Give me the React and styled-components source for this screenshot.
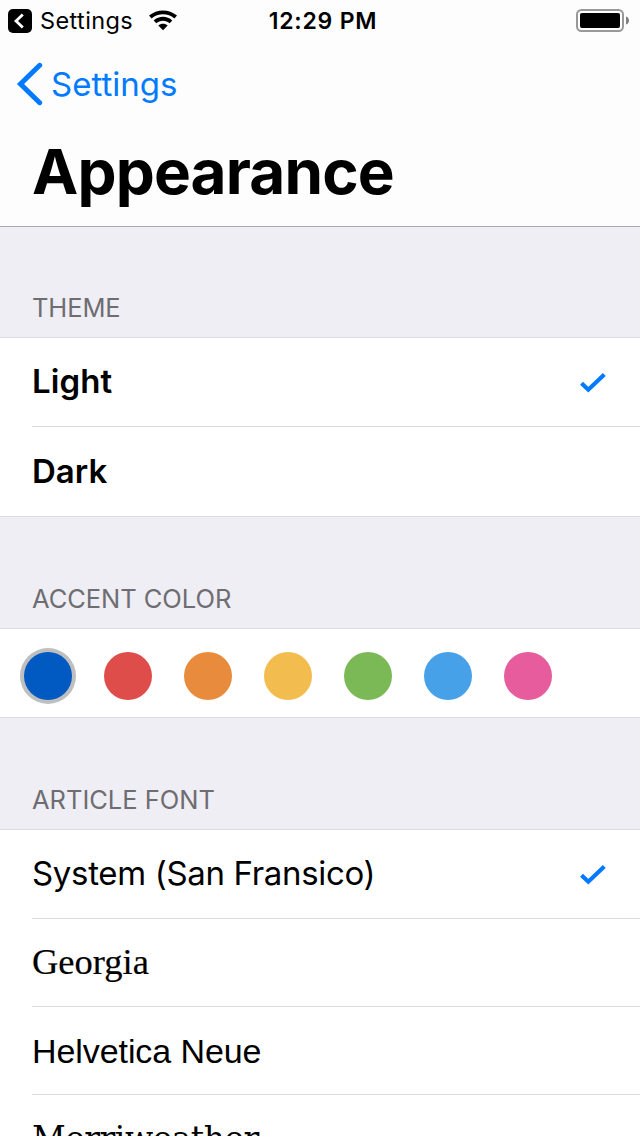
import React from "react";
import styled, { createGlobalStyle } from "styled-components";

const GlobalStyle = createGlobalStyle`
  * { box-sizing: border-box; }
  body { margin: 0; background: #efeef4; }
`;

const Screen = styled.main`
  width: 640px;
  height: 1136px;
  overflow: hidden;
  display: flex;
  flex-direction: column;
  background: #efeef4;
  color: #000;
  font-family: Inter, "Liberation Sans", sans-serif;
`;

const Header = styled.header`
  flex: none;
  height: 227px;
  background: #fdfdfd;
  border-bottom: 1px solid #a9a9ae;
`;

const StatusBar = styled.div`
  height: 40px;
  display: grid;
  grid-template-columns: 1fr auto 1fr;
  align-items: center;
  padding: 1px 11px 0 8px;
`;

const StatusLeft = styled.div`
  display: flex;
  align-items: center;
`;

const StatusLabel = styled.span`
  margin: 0 0 0 8px;
  width: 109px;
  font-size: 23.5px;
  line-height: 40px;
  letter-spacing: 0.4px;
`;

const Clock = styled.time`
  padding-left: 9px;
  font-size: 23px;
  font-weight: 600;
  line-height: 40px;
  letter-spacing: 0.8px;
`;

const StatusRight = styled.div`
  display: flex;
  justify-content: flex-end;
`;

const BackButton = styled.a`
  height: 88px;
  padding-left: 16px;
  display: flex;
  align-items: center;
  gap: 8px;
  color: #007aff;
`;

const BackLabel = styled.span`
  font-size: 33px;
  line-height: 88px;
  letter-spacing: 0;
`;

const Title = styled.h1`
  margin: 0;
  padding-left: 32px;
  font-size: 62px;
  font-weight: 700;
  line-height: 88px;
  letter-spacing: -0.85px;
`;

const SectionTitle = styled.h2`
  flex: none;
  margin: 0;
  height: ${(p) => p.$height}px;
  padding: 0 32px 10px;
  display: flex;
  align-items: flex-end;
  color: #6d6d72;
  font-size: 25.5px;
  font-weight: 400;
  line-height: 38px;
  letter-spacing: ${(p) => p.$tracking}px;
`;

const Group = styled.section`
  flex: none;
  background: #fff;
  border-top: 1px solid #dddde0;
  border-bottom: 1px solid #dddde0;
`;

const Row = styled.div`
  margin-left: 32px;
  height: ${(p) => p.$height || 88}px;
  padding: ${(p) => p.$drop || 0}px 33px 2px 0;
  display: flex;
  align-items: center;
  justify-content: space-between;

  & + & {
    border-top: 1px solid #dcdcde;
  }
`;

const RowLabel = styled.span`
  font-family: ${(p) => p.$font || "inherit"};
  font-size: ${(p) => p.$size || 33}px;
  font-weight: ${(p) => p.$weight || 400};
  letter-spacing: ${(p) => p.$tracking || 0}px;
  -webkit-text-stroke: ${(p) => p.$stroke || 0}px #000;
  white-space: nowrap;
`;

const Swatches = styled.div`
  height: 88px;
  padding: 6px 24px 0;
  display: flex;
  align-items: center;
  gap: 32px;
`;

const Swatch = styled.button`
  width: 48px;
  height: 48px;
  padding: 0;
  border: 0;
  border-radius: 50%;
  background: ${(p) => p.$color};
  box-shadow: ${(p) => (p.$selected ? "0 0 0 4px #bfbfbf" : "none")};
`;

const CheckIcon = styled.svg`
  margin-top: 4px;
`;

const BackBadge = () => (
  <svg width="24" height="24" viewBox="0 0 24 24">
    <rect width="24" height="24" rx="5" />
    <path d="M14.8 5.5 8 12l6.8 6.500" fill="none" stroke="#fff" strokeWidth="2.8" />
  </svg>
);

const Wifi = () => (
  <svg width="28" height="22" viewBox="0 0 28 22">
    <path d="M0 5.600C8-1.300 20-1.300 28 5.600L25.400 8.400C19 2.800 9 2.800 2.600 8.400Z" />
    <path d="M4.700 10.500C10 5.600 18 5.600 23.300 10.500L20.700 13.200C17 9.800 11 9.800 7.300 13.200Z" />
    <path d="M14 20.300 9.300 15.500C12 13.100 16 13.100 18.700 15.500Z" />
  </svg>
);

const Battery = () => (
  <svg width="53" height="24" viewBox="0 0 53 24">
    <rect x="1" y="1" width="46" height="21" rx="4.5" fill="#fff" stroke="#999" strokeWidth="2" />
    <rect x="4" y="4" width="40" height="15" rx="2" />
    <path d="M50 7.5c2 .5 3 2.2 3 4s-1 3.500-3 4Z" fill="#808080" />
  </svg>
);

const Chevron = () => (
  <svg width="27" height="44" viewBox="0 0 27 44">
    <path d="M23.700 3.300 4.500 22 23.700 40.700" fill="none" stroke="#007aff" strokeWidth="5" strokeLinecap="round" />
  </svg>
);

const Check = () => (
  <CheckIcon width="28" height="24" viewBox="0 0 28 24">
    <path d="M2.500 12.300 9.300 18.700 25.300 3.500" fill="none" stroke="#007aff" strokeWidth="4.200" />
  </CheckIcon>
);

const accents = ["#005ac1", "#df4d4b", "#e88b3c", "#f3bc4e", "#7ab955", "#47a1e8", "#e65c9d"];

export default function App() {
  return (
    <Screen>
      <GlobalStyle />
      <Header>
        <StatusBar>
          <StatusLeft>
            <BackBadge />
            <StatusLabel>Settings</StatusLabel>
            <Wifi />
          </StatusLeft>
          <Clock>12:29 PM</Clock>
          <StatusRight>
            <Battery />
          </StatusRight>
        </StatusBar>
        <BackButton>
          <Chevron />
          <BackLabel>Settings</BackLabel>
        </BackButton>
        <Title>Appearance</Title>
      </Header>

      <SectionTitle $height={110} $tracking={-0.1}>THEME</SectionTitle>
      <Group>
        <Row>
          <RowLabel $weight={600} $tracking={0.1}>Light</RowLabel>
          <Check />
        </Row>
        <Row $height={90}>
          <RowLabel $weight={600} $tracking={0}>Dark</RowLabel>
        </Row>
      </Group>

      <SectionTitle $height={111} $tracking={-0.05}>ACCENT COLOR</SectionTitle>
      <Group>
        <Swatches>
          {accents.map((color, i) => (
            <Swatch key={color} $color={color} $selected={i === 0} />
          ))}
        </Swatches>
      </Group>

      <SectionTitle $height={111} $tracking={-0.02}>ARTICLE FONT</SectionTitle>
      <Group>
        <Row>
          <RowLabel $tracking={-0.33}>System (San Fransico)</RowLabel>
          <Check />
        </Row>
        <Row>
          <RowLabel $font={'"Liberation Serif", serif'} $size={36.5} $stroke={0.2}>Georgia</RowLabel>
        </Row>
        <Row $drop={3}>
          <RowLabel $font={'"Liberation Sans", sans-serif'} $size={34} $tracking={-0.08}>Helvetica Neue</RowLabel>
        </Row>
        <Row $drop={2}>
          <RowLabel $font={'"DejaVu Serif", serif'} $size={33} $tracking={-0.5}>Merriweather</RowLabel>
        </Row>
      </Group>
    </Screen>
  );
}
